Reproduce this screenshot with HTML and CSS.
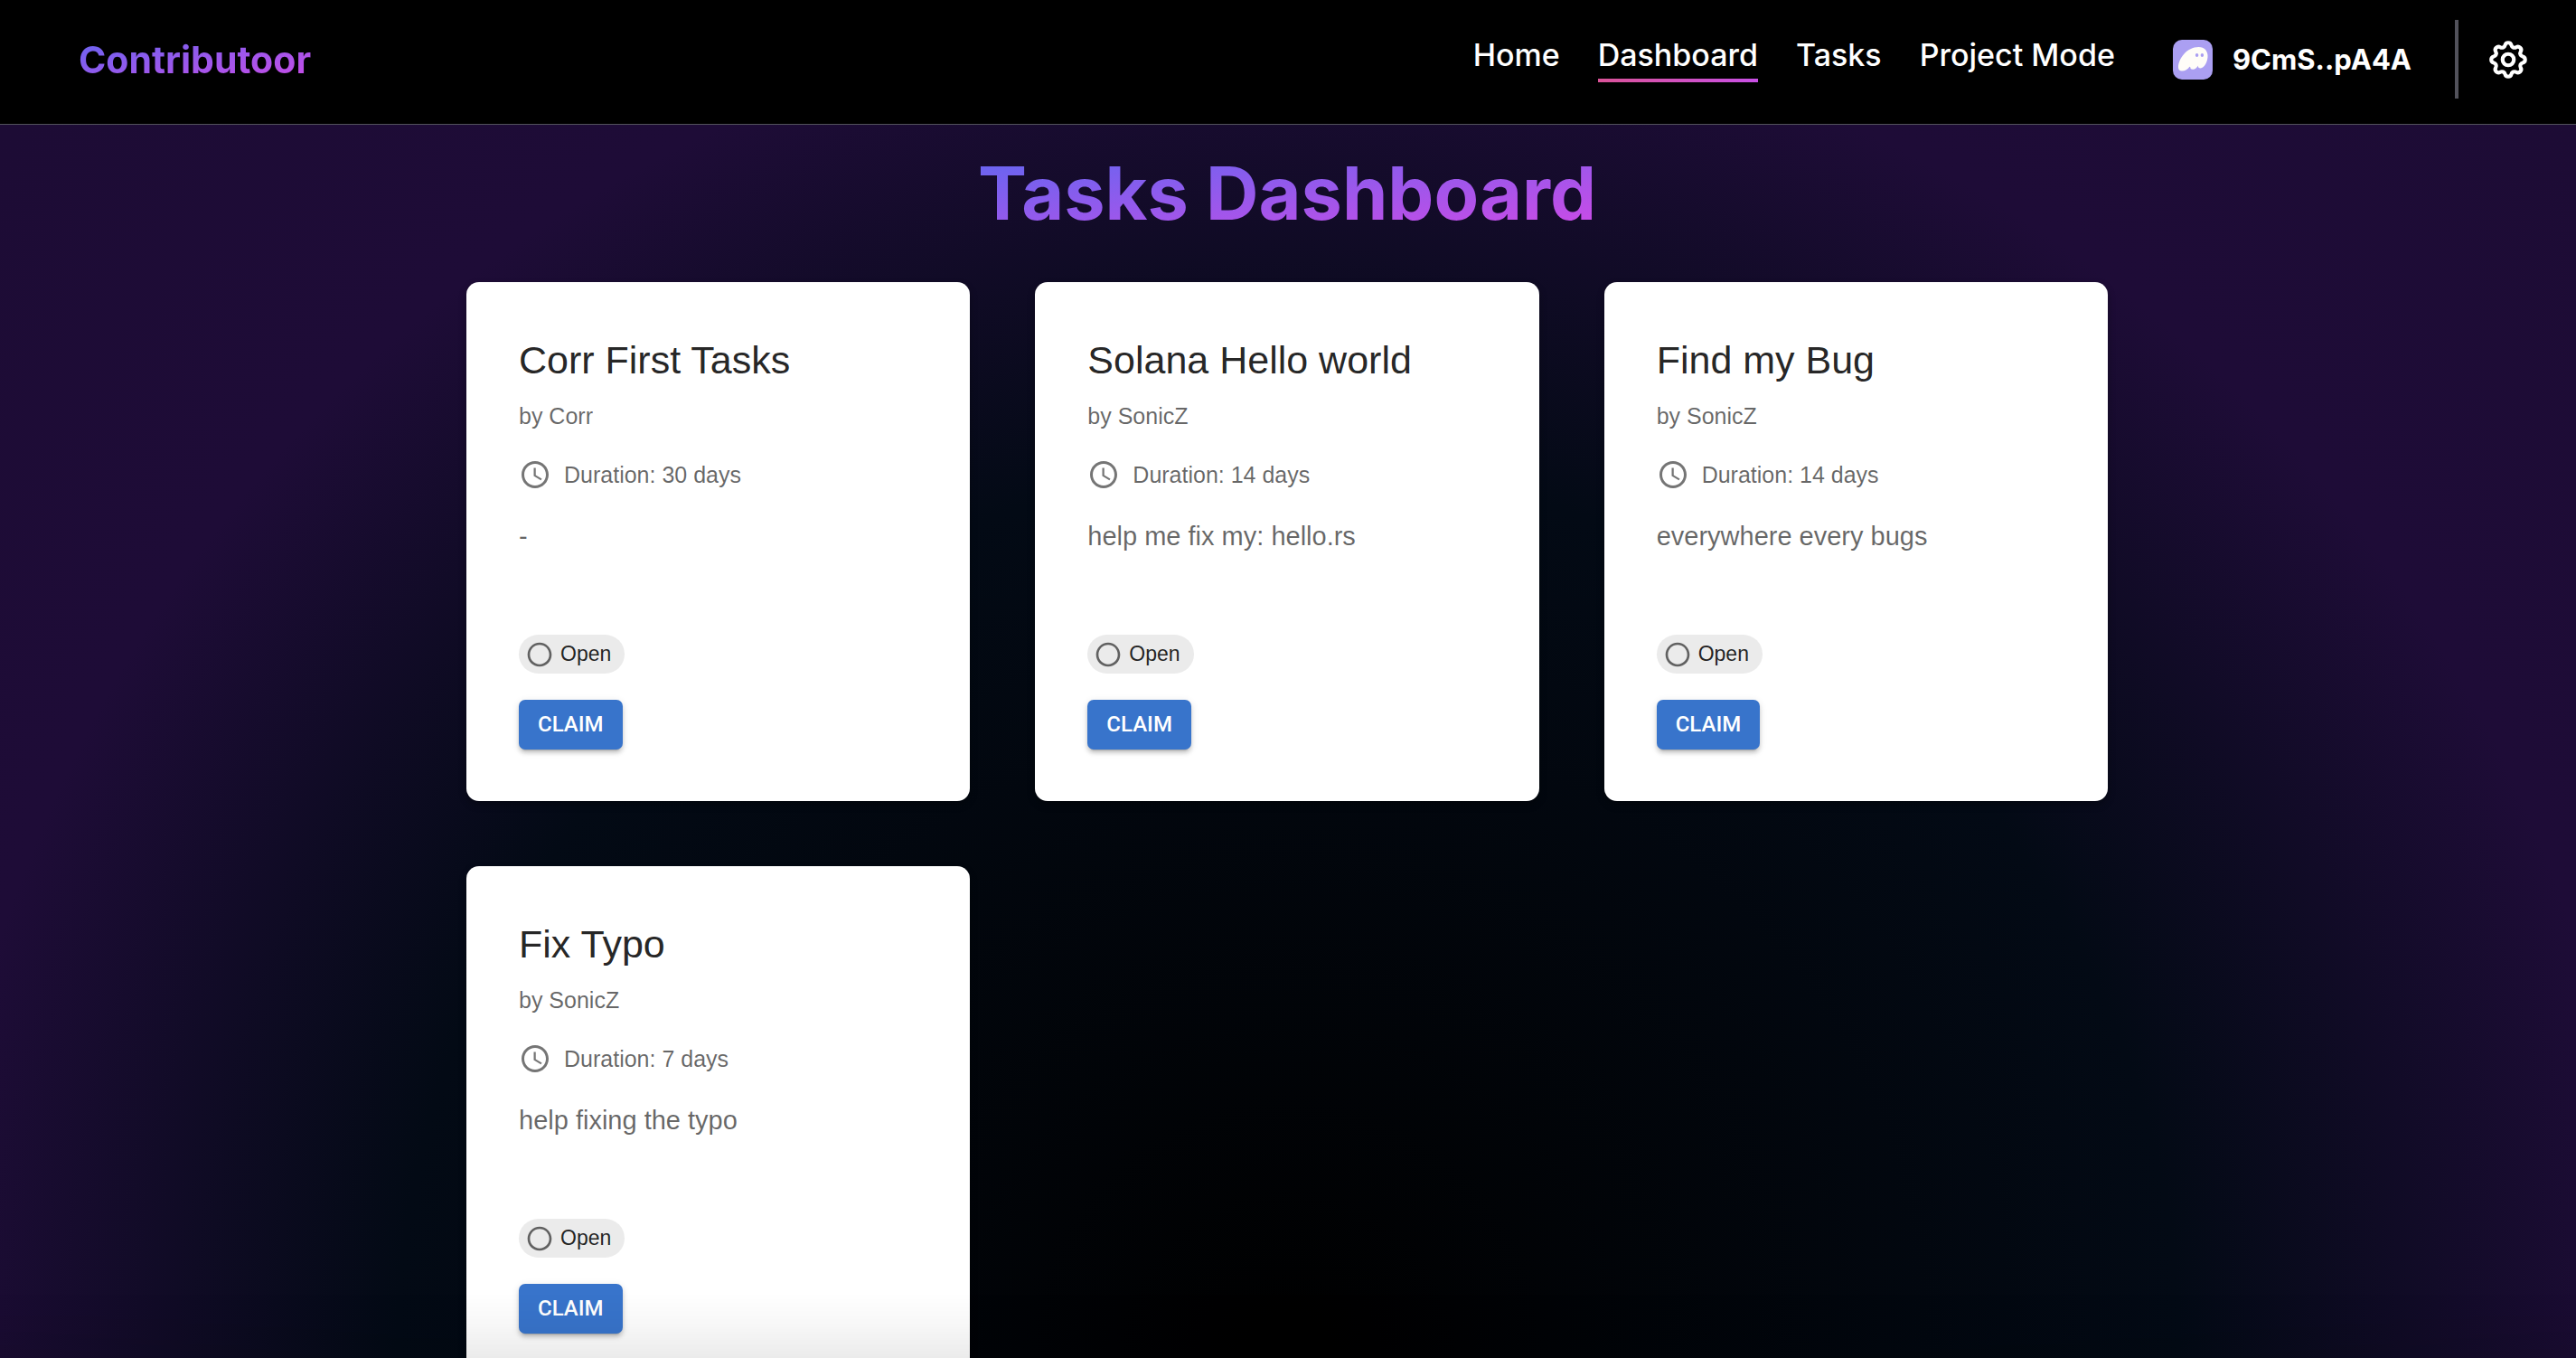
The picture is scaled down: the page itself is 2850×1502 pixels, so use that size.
FILE: index.html
```html
<!DOCTYPE html>
<html lang="en">
<head>
<meta charset="utf-8">
<meta name="viewport" content="width=device-width, initial-scale=1">
<title>Contributoor</title>
<link rel="stylesheet" href="styles.css">
</head>
<body>
<svg class="sprite" aria-hidden="true">
  <symbol id="clock" viewBox="0 0 24 24"><path d="M11.99 2C6.47 2 2 6.48 2 12s4.47 10 9.99 10C17.52 22 22 17.52 22 12S17.52 2 11.99 2zM12 20c-4.42 0-8-3.58-8-8s3.58-8 8-8 8 3.58 8 8-3.58 8-8 8zm.5-13H11v6l5.250 3.150.75-1.230-4.500-2.670z"/></symbol>
  <symbol id="circle" viewBox="0 0 24 24"><path d="M12 2C6.480 2 2 6.480 2 12s4.480 10 10 10 10-4.480 10-10S17.520 2 12 2zm0 18c-4.420 0-8-3.580-8-8s3.580-8 8-8 8 3.580 8 8-3.580 8-8 8z"/></symbol>
</svg>
<header class="topbar">
  <a class="brand" href="#">Contributoor</a>
  <nav class="nav">
    <a class="nav-link" href="#">Home</a>
    <a class="nav-link active" href="#" aria-current="page">Dashboard</a>
    <a class="nav-link" href="#">Tasks</a>
    <a class="nav-link" href="#">Project Mode</a>
  </nav>
  <button class="wallet" type="button">
    <svg class="wallet-icon" viewBox="0 0 44 44" aria-hidden="true">
      <rect width="44" height="44" rx="10" fill="#ab9ff2"/>
      <path fill="#fffdf8" fill-rule="evenodd" d="M18.500 29.800c-2 3-5 4.700-8.500 4.700-2.500 0-4-1.500-4-4C6 21 15.500 8 28.500 8 35.500 8 38 12.500 38.500 17c.5 6-3.500 14.500-8 14.500-1.600 0-2.500-.8-2.500-2 0-.3 0-.6.1-1-1.300 2.200-3.600 4.300-6 4.300-1.900 0-2.800-1-2.800-2.300 0-.3 0-.5-.800-.7z M26.600 15c-1 0-1.700.9-1.700 2s.7 2 1.700 2 1.700-.9 1.700-2-.7-2-1.700-2z M32.400 15c-1 0-1.700.9-1.700 2s.7 2 1.700 2 1.700-.9 1.700-2-.7-2-1.700-2z"/>
    </svg>
    <span>9CmS..pA4A</span>
  </button>
  <div class="settings">
    <button class="settings-button" type="button" aria-label="Settings">
      <svg viewBox="0 0 24 24" fill="none" stroke="currentColor" stroke-width="2" stroke-linecap="round" stroke-linejoin="round" aria-hidden="true">
        <path d="M10.325 4.317c.426-1.756 2.924-1.756 3.350 0a1.724 1.724 0 002.573 1.066c1.543-.94 3.310.826 2.370 2.370a1.724 1.724 0 001.065 2.572c1.756.426 1.756 2.924 0 3.350a1.724 1.724 0 00-1.066 2.573c.94 1.543-.826 3.310-2.370 2.370a1.724 1.724 0 00-2.572 1.065c-.426 1.756-2.924 1.756-3.350 0a1.724 1.724 0 00-2.573-1.066c-1.543.94-3.310-.826-2.370-2.370a1.724 1.724 0 00-1.065-2.572c-1.756-.426-1.756-2.924 0-3.350a1.724 1.724 0 001.066-2.573c-.94-1.543.826-3.310 2.370-2.370.996.608 2.296.070 2.572-1.065z"/>
        <circle cx="12" cy="12" r="3"/>
      </svg>
    </button>
  </div>
</header>
<main class="page">
  <h1 class="page-title">Tasks Dashboard</h1>
  <div class="grid">
    <article class="card">
      <h2 class="card-title">Corr First Tasks</h2>
      <p class="author">by Corr</p>
      <p class="duration"><svg class="clock" aria-hidden="true"><use href="#clock"/></svg>Duration: 30 days</p>
      <p class="description">-</p>
      <span class="chip"><svg class="chip-icon" aria-hidden="true"><use href="#circle"/></svg>Open</span>
      <button class="claim" type="button">CLAIM</button>
    </article>
    <article class="card">
      <h2 class="card-title">Solana Hello world</h2>
      <p class="author">by SonicZ</p>
      <p class="duration"><svg class="clock" aria-hidden="true"><use href="#clock"/></svg>Duration: 14 days</p>
      <p class="description">help me fix my: hello.rs</p>
      <span class="chip"><svg class="chip-icon" aria-hidden="true"><use href="#circle"/></svg>Open</span>
      <button class="claim" type="button">CLAIM</button>
    </article>
    <article class="card">
      <h2 class="card-title">Find my Bug</h2>
      <p class="author">by SonicZ</p>
      <p class="duration"><svg class="clock" aria-hidden="true"><use href="#clock"/></svg>Duration: 14 days</p>
      <p class="description">everywhere every bugs</p>
      <span class="chip"><svg class="chip-icon" aria-hidden="true"><use href="#circle"/></svg>Open</span>
      <button class="claim" type="button">CLAIM</button>
    </article>
    <article class="card">
      <h2 class="card-title">Fix Typo</h2>
      <p class="author">by SonicZ</p>
      <p class="duration"><svg class="clock" aria-hidden="true"><use href="#clock"/></svg>Duration: 7 days</p>
      <p class="description">help fixing the typo</p>
      <span class="chip"><svg class="chip-icon" aria-hidden="true"><use href="#circle"/></svg>Open</span>
      <button class="claim" type="button">CLAIM</button>
    </article>
  </div>
</main>
<div class="bottom-shade" aria-hidden="true"></div>
</body>
</html>
```
FILE: styles.css
```css
* { box-sizing: border-box; }

html { height: 100%; background: #000; }

body {
  margin: 0;
  height: 100vh;
  display: flex;
  flex-direction: column;
  overflow: hidden;
  font-family: "Liberation Sans", Arial, sans-serif;
  color: #fff;
}

h1, h2, p { margin: 0; }
a { color: inherit; text-decoration: none; }
button { border: 0; padding: 0; background: none; color: inherit; cursor: pointer; }
.sprite { display: none; }

/* Top bar */
.topbar {
  flex: none;
  display: flex;
  align-items: center;
  height: 138px;
  padding: 0 50px 6px 87px;
  background: #000;
  border-bottom: 1px solid #52525b;
  font-family: Inter, sans-serif;
}

.brand,
.page-title {
  font-weight: 700;
  background: linear-gradient(to bottom right, #6366f1, #cf4ae6);
  -webkit-background-clip: text;
  background-clip: text;
  color: transparent;
}

.brand {
  margin-right: auto;
  font-size: 41px;
  line-height: 58px;
}

.nav { display: flex; gap: 42px; }

.nav-link {
  padding-bottom: 5px;
  border-bottom: 4px solid transparent;
  font-size: 34px;
  font-weight: 500;
  line-height: 42px;
}

.nav-link.active { border-image: linear-gradient(to right, #db5396, #c850e8) 4; }

.wallet {
  display: flex;
  align-items: center;
  gap: 22px;
  margin-left: 64px;
  font-family: Inter, sans-serif;
  font-size: 31px;
  font-weight: 700;
  line-height: 44px;
}

.wallet-icon { width: 44px; height: 44px; }

.settings {
  display: flex;
  align-items: center;
  height: 87px;
  margin-left: 48px;
  padding-left: 30px;
  border-left: 4px solid #52525b;
}

.settings-button { width: 50px; height: 50px; }
.settings-button svg { display: block; width: 50px; height: 50px; }

/* Page */
.page {
  flex: 1;
  min-height: 0;
  padding: 32px 37px 32px 35px;
  background: radial-gradient(circle at bottom, #000 0%, #030a15 50%, #1e0c37 76%, #1d0c35 100%);
}

.page-title {
  width: fit-content;
  margin: 0 auto 54px;
  font-family: Inter, sans-serif;
  font-size: 81px;
  line-height: 88px;
}

.grid {
  display: grid;
  grid-template-columns: repeat(3, 1fr);
  gap: 72px;
  max-width: 1816px;
  margin: 0 auto;
}

.card {
  display: flex;
  flex-direction: column;
  align-items: flex-start;
  padding: 58px 58px 57px;
  border-radius: 14px;
  background: #fff;
  color: rgba(0, 0, 0, 0.6);
  box-shadow: 0 4px 8px rgba(0, 0, 0, 0.3);
}

.card-title {
  margin-bottom: 15px;
  font-size: 43px;
  font-weight: 400;
  line-height: 57px;
  color: rgba(0, 0, 0, 0.87);
}

.author, .duration { margin-bottom: 29px; font-size: 25px; line-height: 36px; }
.duration { display: flex; align-items: center; gap: 14px; }
.clock { width: 36px; height: 36px; fill: #757575; }

.description {
  min-height: 101px;
  margin-bottom: 29px;
  font-size: 29px;
  line-height: 43px;
}

.chip {
  display: flex;
  align-items: center;
  gap: 7px;
  height: 43px;
  margin-bottom: 29px;
  padding: 0 15px 0 7px;
  border-radius: 22px;
  background: #ebebeb;
  font-size: 23px;
  color: rgba(0, 0, 0, 0.87);
}

.chip-icon { width: 32px; height: 32px; fill: #616161; }

.claim {
  padding: 7px 21px;
  border-radius: 7px;
  background: #3874cb;
  font-family: Roboto, "Liberation Sans", sans-serif;
  font-size: 24px;
  font-weight: 500;
  line-height: 41px;
  color: #fff;
  box-shadow: 0 5px 2px -4px rgba(0, 0, 0, 0.2), 0 4px 4px rgba(0, 0, 0, 0.14), 0 2px 9px rgba(0, 0, 0, 0.12);
}

/* Shade along the foot of the window */
.bottom-shade {
  position: fixed;
  right: 0;
  bottom: 0;
  left: 0;
  height: 72px;
  background: linear-gradient(to bottom, transparent, rgba(0, 0, 0, 0.03) 50%, rgba(0, 0, 0, 0.08));
  pointer-events: none;
}
```
